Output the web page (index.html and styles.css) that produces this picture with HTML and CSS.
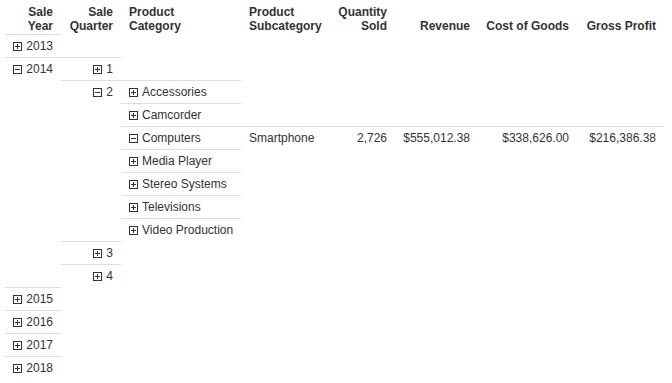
FILE: index.html
```html
<!DOCTYPE html>
<html lang="en">
<head>
    <meta charset="UTF-8">
    <title>Pivot Grid</title>
    <link rel="stylesheet" href="styles.css">
</head>
<body>
    <table class="pivot">
        <colgroup>
            <col class="c-year">
            <col class="c-quarter">
            <col class="c-cat">
            <col class="c-sub">
            <col class="c-qty">
            <col class="c-rev">
            <col class="c-cost">
            <col class="c-gross">
        </colgroup>
        <thead>
            <tr>
                <th class="num">Sale<br>Year</th>
                <th class="num">Sale<br>Quarter</th>
                <th>Product<br>Category</th>
                <th>Product<br>Subcategory</th>
                <th class="num">Quantity<br>Sold</th>
                <th class="num">Revenue</th>
                <th class="num">Cost of Goods</th>
                <th class="num">Gross Profit</th>
            </tr>
        </thead>
        <tbody>
            <tr>
                <td class="b num"><span class="tg plus"></span>2013</td>
                <td></td><td></td><td></td><td></td><td></td><td></td><td></td>
            </tr>
            <tr>
                <td class="b num"><span class="tg minus"></span>2014</td>
                <td class="b num"><span class="tg plus"></span>1</td>
                <td></td><td></td><td></td><td></td><td></td><td></td>
            </tr>
            <tr>
                <td></td>
                <td class="b num"><span class="tg minus"></span>2</td>
                <td class="b"><span class="tg plus"></span>Accessories</td>
                <td></td><td></td><td></td><td></td><td></td>
            </tr>
            <tr>
                <td></td><td></td>
                <td class="b"><span class="tg plus"></span>Camcorder</td>
                <td></td><td></td><td></td><td></td><td></td>
            </tr>
            <tr>
                <td></td><td></td>
                <td class="b"><span class="tg minus"></span>Computers</td>
                <td class="b">Smartphone</td>
                <td class="b num">2,726</td>
                <td class="b num">$555,012.38</td>
                <td class="b num">$338,626.00</td>
                <td class="b num">$216,386.38</td>
            </tr>
            <tr>
                <td></td><td></td>
                <td class="b"><span class="tg plus"></span>Media Player</td>
                <td></td><td></td><td></td><td></td><td></td>
            </tr>
            <tr>
                <td></td><td></td>
                <td class="b"><span class="tg plus"></span>Stereo Systems</td>
                <td></td><td></td><td></td><td></td><td></td>
            </tr>
            <tr>
                <td></td><td></td>
                <td class="b"><span class="tg plus"></span>Televisions</td>
                <td></td><td></td><td></td><td></td><td></td>
            </tr>
            <tr>
                <td></td><td></td>
                <td class="b"><span class="tg plus"></span>Video Production</td>
                <td></td><td></td><td></td><td></td><td></td>
            </tr>
            <tr>
                <td></td>
                <td class="b num"><span class="tg plus"></span>3</td>
                <td></td><td></td><td></td><td></td><td></td><td></td>
            </tr>
            <tr>
                <td></td>
                <td class="b num"><span class="tg plus"></span>4</td>
                <td></td><td></td><td></td><td></td><td></td><td></td>
            </tr>
            <tr>
                <td class="b num"><span class="tg plus"></span>2015</td>
                <td></td><td></td><td></td><td></td><td></td><td></td><td></td>
            </tr>
            <tr>
                <td class="b num"><span class="tg plus"></span>2016</td>
                <td></td><td></td><td></td><td></td><td></td><td></td><td></td>
            </tr>
            <tr>
                <td class="b num"><span class="tg plus"></span>2017</td>
                <td></td><td></td><td></td><td></td><td></td><td></td><td></td>
            </tr>
            <tr>
                <td class="b num"><span class="tg plus"></span>2018</td>
                <td></td><td></td><td></td><td></td><td></td><td></td><td></td>
            </tr>
        </tbody>
    </table>
</body>
</html>
```

FILE: styles.css
```css
body {
    margin: 0;
    padding: 0 0 0 5px;
    font-family: "Liberation Sans", Arial, sans-serif;
    font-size: 12px;
    color: #333;
    background: #fff;
}
.pivot {
    border-collapse: collapse;
    table-layout: fixed;
    width: 659px;
}
.c-year { width: 56px; }
.c-quarter { width: 60px; }
.c-cat { width: 120px; }
.c-sub { width: 89px; }
.c-qty { width: 65px; }
.c-rev { width: 83px; }
.c-cost { width: 99px; }
.c-gross { width: 87px; }
.pivot th {
    font-weight: bold;
    text-align: left;
    vertical-align: bottom;
    line-height: 14px;
    padding: 5px 8px 1px 8px;
    white-space: nowrap;
    color: #333;
}
.pivot td {
    line-height: 14px;
    height: 14px;
    padding: 4px 8px 4px 8px;
    border-top: 1px solid transparent;
    white-space: nowrap;
}
.pivot td.b {
    border-top: 1px solid #ddd;
}
.pivot .num {
    text-align: right;
}
.tg {
    display: inline-block;
    width: 9px;
    height: 9px;
    box-sizing: border-box;
    border: 1px solid #333;
    margin-right: 4px;
    vertical-align: -1px;
    position: relative;
}
.tg::before {
    content: "";
    position: absolute;
    left: 1px;
    top: 3px;
    width: 5px;
    height: 1px;
    background: #333;
}
.tg.plus::after {
    content: "";
    position: absolute;
    left: 3px;
    top: 1px;
    width: 1px;
    height: 5px;
    background: #333;
}
```
